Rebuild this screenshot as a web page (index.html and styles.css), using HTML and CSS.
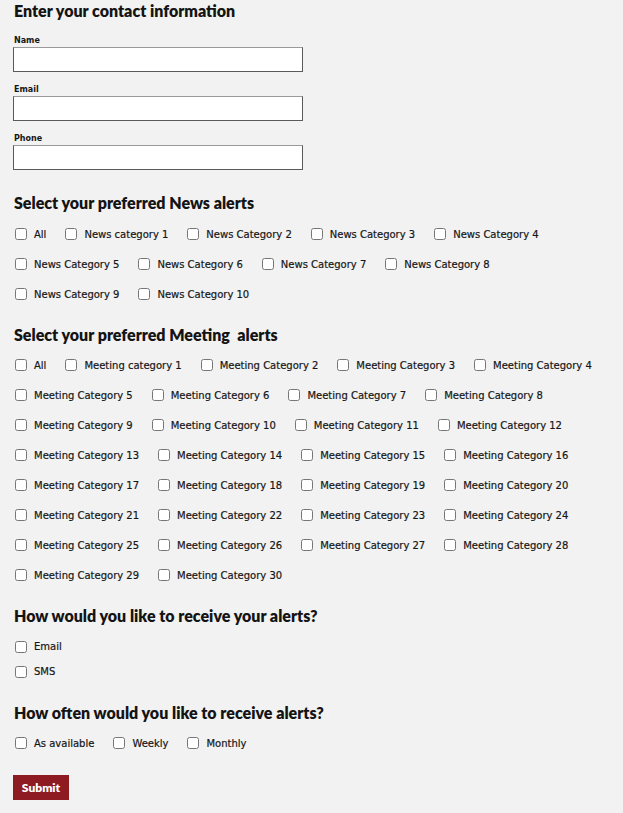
FILE: index.html
```html
<!DOCTYPE html>
<html lang="en">
<head>
<meta charset="utf-8">
<title>Alerts sign-up</title>
<link rel="stylesheet" href="styles.css">
</head>
<body>
<form class="form">
  <h2 class="heading heading-first">Enter your contact information</h2>
  <div class="field field-first">
    <label class="field-label" for="name">Name</label>
    <input class="text-input" id="name" type="text">
  </div>
  <div class="field">
    <label class="field-label" for="email">Email</label>
    <input class="text-input" id="email" type="text">
  </div>
  <div class="field">
    <label class="field-label" for="phone">Phone</label>
    <input class="text-input" id="phone" type="text">
  </div>

  <h2 class="heading heading-news">Select your preferred News alerts</h2>
  <div class="options">
    <div class="row">
      <label class="opt"><input type="checkbox" class="cb"><span>All</span></label>
      <label class="opt"><input type="checkbox" class="cb"><span>News category 1</span></label>
      <label class="opt"><input type="checkbox" class="cb"><span>News Category 2</span></label>
      <label class="opt"><input type="checkbox" class="cb"><span>News Category 3</span></label>
      <label class="opt"><input type="checkbox" class="cb"><span>News Category 4</span></label>
    </div>
    <div class="row">
      <label class="opt"><input type="checkbox" class="cb"><span>News Category 5</span></label>
      <label class="opt"><input type="checkbox" class="cb"><span>News Category 6</span></label>
      <label class="opt"><input type="checkbox" class="cb"><span>News Category 7</span></label>
      <label class="opt"><input type="checkbox" class="cb"><span>News Category 8</span></label>
    </div>
    <div class="row">
      <label class="opt"><input type="checkbox" class="cb"><span>News Category 9</span></label>
      <label class="opt"><input type="checkbox" class="cb"><span>News Category 10</span></label>
    </div>
  </div>

  <h2 class="heading heading-section">Select your preferred Meeting&nbsp; alerts</h2>
  <div class="options options-tight">
    <div class="row">
      <label class="opt"><input type="checkbox" class="cb"><span>All</span></label>
      <label class="opt"><input type="checkbox" class="cb"><span>Meeting category 1</span></label>
      <label class="opt"><input type="checkbox" class="cb"><span>Meeting Category 2</span></label>
      <label class="opt"><input type="checkbox" class="cb"><span>Meeting Category 3</span></label>
      <label class="opt"><input type="checkbox" class="cb"><span>Meeting Category 4</span></label>
    </div>
    <div class="row">
      <label class="opt"><input type="checkbox" class="cb"><span>Meeting Category 5</span></label>
      <label class="opt"><input type="checkbox" class="cb"><span>Meeting Category 6</span></label>
      <label class="opt"><input type="checkbox" class="cb"><span>Meeting Category 7</span></label>
      <label class="opt"><input type="checkbox" class="cb"><span>Meeting Category 8</span></label>
    </div>
    <div class="row">
      <label class="opt"><input type="checkbox" class="cb"><span>Meeting Category 9</span></label>
      <label class="opt"><input type="checkbox" class="cb"><span>Meeting Category 10</span></label>
      <label class="opt"><input type="checkbox" class="cb"><span>Meeting Category 11</span></label>
      <label class="opt"><input type="checkbox" class="cb"><span>Meeting Category 12</span></label>
    </div>
    <div class="row">
      <label class="opt"><input type="checkbox" class="cb"><span>Meeting Category 13</span></label>
      <label class="opt"><input type="checkbox" class="cb"><span>Meeting Category 14</span></label>
      <label class="opt"><input type="checkbox" class="cb"><span>Meeting Category 15</span></label>
      <label class="opt"><input type="checkbox" class="cb"><span>Meeting Category 16</span></label>
    </div>
    <div class="row">
      <label class="opt"><input type="checkbox" class="cb"><span>Meeting Category 17</span></label>
      <label class="opt"><input type="checkbox" class="cb"><span>Meeting Category 18</span></label>
      <label class="opt"><input type="checkbox" class="cb"><span>Meeting Category 19</span></label>
      <label class="opt"><input type="checkbox" class="cb"><span>Meeting Category 20</span></label>
    </div>
    <div class="row">
      <label class="opt"><input type="checkbox" class="cb"><span>Meeting Category 21</span></label>
      <label class="opt"><input type="checkbox" class="cb"><span>Meeting Category 22</span></label>
      <label class="opt"><input type="checkbox" class="cb"><span>Meeting Category 23</span></label>
      <label class="opt"><input type="checkbox" class="cb"><span>Meeting Category 24</span></label>
    </div>
    <div class="row">
      <label class="opt"><input type="checkbox" class="cb"><span>Meeting Category 25</span></label>
      <label class="opt"><input type="checkbox" class="cb"><span>Meeting Category 26</span></label>
      <label class="opt"><input type="checkbox" class="cb"><span>Meeting Category 27</span></label>
      <label class="opt"><input type="checkbox" class="cb"><span>Meeting Category 28</span></label>
    </div>
    <div class="row">
      <label class="opt"><input type="checkbox" class="cb"><span>Meeting Category 29</span></label>
      <label class="opt"><input type="checkbox" class="cb"><span>Meeting Category 30</span></label>
    </div>
  </div>

  <h2 class="heading heading-section">How would you like to receive your alerts?</h2>
  <div class="options options-stack">
    <label class="opt opt-stack"><input type="checkbox" class="cb"><span>Email</span></label>
    <label class="opt opt-stack"><input type="checkbox" class="cb"><span>SMS</span></label>
  </div>

  <h2 class="heading heading-often">How often would you like to receive alerts?</h2>
  <div class="options options-tight">
    <div class="row">
      <label class="opt"><input type="checkbox" class="cb"><span>As available</span></label>
      <label class="opt"><input type="checkbox" class="cb"><span>Weekly</span></label>
      <label class="opt"><input type="checkbox" class="cb"><span>Monthly</span></label>
    </div>
  </div>

  <button type="button" class="submit">Submit</button>
</form>
</body>
</html>
```

FILE: styles.css
```css
html, body {
  margin: 0;
  padding: 0;
  background: #f2f2f2;
}

body {
  font-family: "DejaVu Sans", "Liberation Sans", sans-serif;
  color: #161616;
}

.form {
  padding: 0 13px 20px 13px;
}

.heading {
  margin: 0;
  font-family: Lato, "DejaVu Sans", sans-serif;
  font-size: 16px;
  line-height: 22px;
  font-weight: 800;
  padding-left: 1px;
  color: #141414;
}

.heading-news {
  margin-top: 22px;
}

.heading-section {
  margin-top: 15px;
}

.heading-often {
  margin-top: 18px;
}

.field {
  margin-top: 11px;
  display: flex;
  flex-direction: column;
}

.field-first {
  margin-top: 12px;
}

.field-label {
  font-size: 8px;
  line-height: 13px;
  font-weight: bold;
  padding-left: 1px;
}

.text-input {
  width: 290px;
  height: 25px;
  box-sizing: border-box;
  margin: 0;
  background: #fff;
  border: 1px solid #5a5a5a;
  border-top-color: #9a9a9a;
  border-radius: 0;
}

.options {
  margin-top: 5px;
}

.options-tight {
  margin-top: 4px;
}

.row {
  display: flex;
  height: 30px;
  align-items: center;
}

.opt {
  display: flex;
  align-items: center;
  margin-right: 17px;
  font-size: 10px;
  white-space: nowrap;
  -webkit-text-stroke: 0.2px #161616;
}

.cb {
  width: 12px;
  height: 12px;
  margin: 0 7px 0 2px;
}

.options-stack {
  margin-top: 7px;
}

.opt-stack {
  height: 25px;
}

.submit {
  margin-top: 17px;
  display: block;
  width: 56px;
  height: 25px;
  padding: 0;
  border: none;
  background: #8e1b22;
  color: #fff;
  font-family: Lato, "DejaVu Sans", sans-serif;
  font-weight: 800;
  font-size: 12px;
  border-radius: 0;
}
```
